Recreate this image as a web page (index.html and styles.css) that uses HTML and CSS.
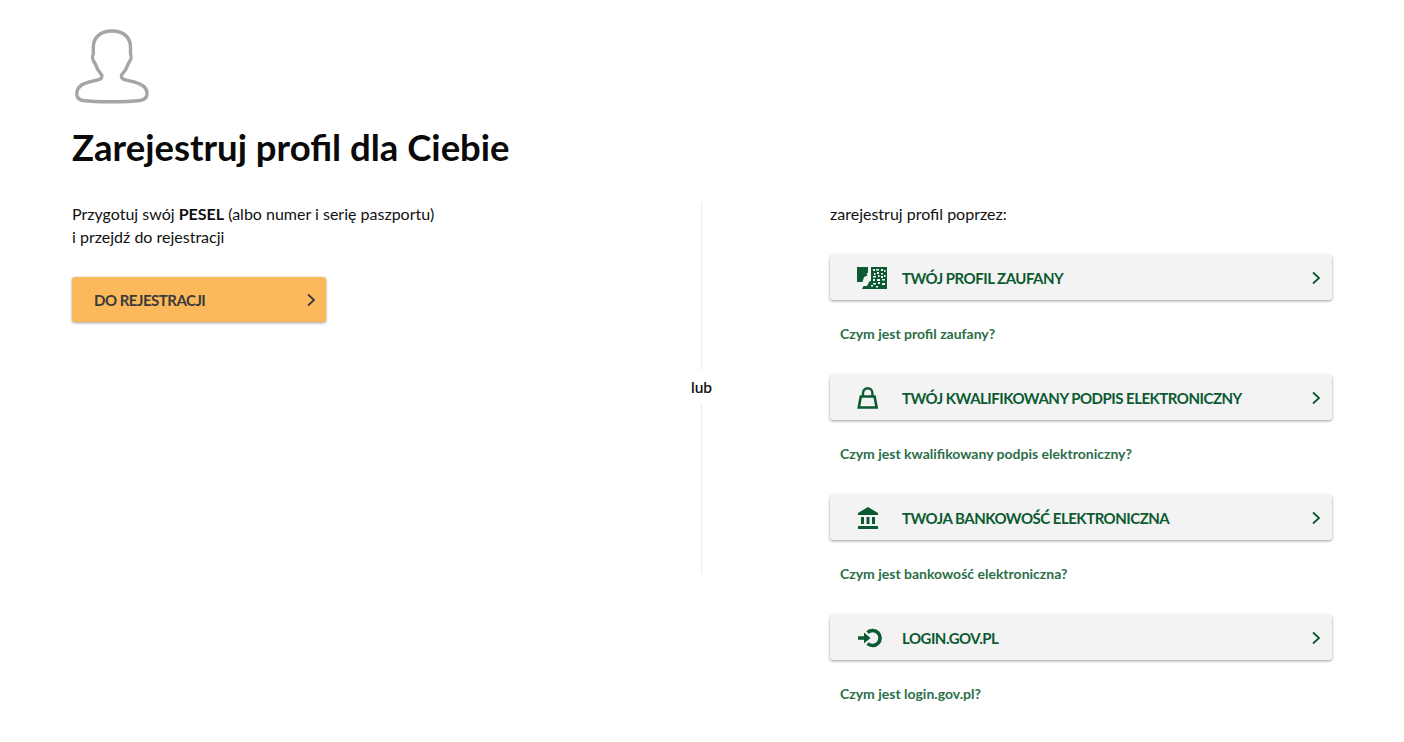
FILE: index.html
```html
<!DOCTYPE html>
<html lang="pl">
<head>
  <meta charset="UTF-8">
  <meta name="viewport" content="width=device-width, initial-scale=1.0">
  <title>Zarejestruj profil dla Ciebie</title>
  <link rel="stylesheet" href="styles.css">
</head>
<body>
  <svg class="avatar" viewBox="74 28 76 76" width="76" height="76">
    <path d="M112 31C100 31 93.300 38 93.300 47V54C91.800 56 92.500 60 95 63.300 96.500 68 99 72 101.700 75 102.500 77 101.500 78.500 99.300 79.300 94 81 86 82 81.700 85 78 87.500 76.500 91 76.800 94.500 77.200 98 79.500 100 83 100.500 92 101.700 102 101.800 111 101.800S131 101.700 140 100.500C143.500 100 146.500 98 147 94.500 147.300 91 146 87.500 141.700 85 137 82 129 81 124 79.300 121.800 78.500 120.800 77 121.600 75 124.500 72 127 68 128.500 63.300 131 60 131.800 56 130.500 54V47C130.500 38 124 31 112 31Z" fill="none" stroke="#a5a5a5" stroke-width="3.400"/>
  </svg>
  <h1>Zarejestruj profil dla Ciebie</h1>

  <div class="columns">
    <div class="left">
      <p class="intro">Przygotuj swój <b>PESEL</b> (albo numer i serię paszportu)<br>i przejdź do rejestracji</p>
      <a class="btn btn-orange" href="#">
        <span>DO REJESTRACJI</span>
        <svg class="chev" viewBox="0 0 10 14" width="10" height="14"><path d="M2 1.500 8 7l-6 5.500" fill="none" stroke="#3a3a3a" stroke-width="1.800"/></svg>
      </a>
    </div>

    <div class="divider"><span>lub</span></div>

    <div class="right">
      <p class="lead">zarejestruj profil poprzez:</p>

      <a class="btn btn-grey" href="#">
        <svg class="ico" viewBox="0 0 32 24" width="32" height="24">
          <path d="M1 1h11v5.500l-1.500 1.500 1 1.500-3.500 1.500-1.500 5H1z" fill="#0b5a31"/>
          <path d="M15 1h16v22H6l1.500-3h3.500l2-4 2-1.500z" fill="#0b5a31"/>
          <path d="M17 3h2v2h-2zm3 0h3v1.500h-3zm5 0h2v2h-2zm3 1h1.500v2H28zM18 7h1.500v2H18zm3-1h2v2h-2zm4 1h2v1.500h-2zm-8 3h3v1.500h-3zm5-1h1.500v2H22zm3 1h2v2h-2zm3-1h1.500v2H28zM17 13h2v2h-2zm4 0h3v2h-3zm5 0h3v1.500h-3zm-9 4h3v1.500h-3zm5-1h2v2h-2zm4 1h3v2h-3zm-11 2h2v1.500h-2zm5 1h2v1.500h-2z" fill="#f3f3f3"/>
        </svg>
        <span>TWÓJ PROFIL ZAUFANY</span>
        <svg class="chev" viewBox="0 0 10 14" width="10" height="14"><path d="M2 1.500 8 7l-6 5.500" fill="none" stroke="#0b5a31" stroke-width="1.800"/></svg>
      </a>
      <a class="more" href="#">Czym jest profil zaufany?</a>

      <a class="btn btn-grey" href="#">
        <svg class="ico" viewBox="0 0 32 24" width="32" height="24">
          <path d="M7 10V7a4.700 4.700 0 0 1 9.400 0v3" fill="none" stroke="#0b5a31" stroke-width="2.400"/>
          <path d="M4.800 10.500h13.800l2 11H2.800z" fill="none" stroke="#0b5a31" stroke-width="2.600"/>
        </svg>
        <span>TWÓJ KWALIFIKOWANY PODPIS ELEKTRONICZNY</span>
        <svg class="chev" viewBox="0 0 10 14" width="10" height="14"><path d="M2 1.500 8 7l-6 5.500" fill="none" stroke="#0b5a31" stroke-width="1.800"/></svg>
      </a>
      <a class="more" href="#">Czym jest kwalifikowany podpis elektroniczny?</a>

      <a class="btn btn-grey" href="#">
        <svg class="ico" viewBox="0 0 32 24" width="32" height="24">
          <path d="M12 1 2 7v2h20V7z" fill="#0b5a31"/>
          <path d="M5 11h3v7H5zm5.500 0h3v7h-3zM16 11h3v7h-3z" fill="#0b5a31"/>
          <path d="M2 20h20v3H2z" fill="#0b5a31"/>
        </svg>
        <span>TWOJA BANKOWOŚĆ ELEKTRONICZNA</span>
        <svg class="chev" viewBox="0 0 10 14" width="10" height="14"><path d="M2 1.500 8 7l-6 5.500" fill="none" stroke="#0b5a31" stroke-width="1.800"/></svg>
      </a>
      <a class="more" href="#">Czym jest bankowość elektroniczna?</a>

      <a class="btn btn-grey" href="#">
        <svg class="ico" viewBox="0 0 32 24" width="32" height="24">
          <path d="M11.500 6.500A7.500 7.500 0 1 1 11.500 17.500" fill="none" stroke="#0b5a31" stroke-width="3.600"/>
          <path d="M2 10.200h6V6.500l6.500 5.500L8 17.500v-3.700H2z" fill="#0b5a31"/>
        </svg>
        <span>LOGIN.GOV.PL</span>
        <svg class="chev" viewBox="0 0 10 14" width="10" height="14"><path d="M2 1.500 8 7l-6 5.500" fill="none" stroke="#0b5a31" stroke-width="1.800"/></svg>
      </a>
      <a class="more" href="#">Czym jest login.gov.pl?</a>
    </div>
  </div>
</body>
</html>
```

FILE: styles.css
```css
html, body {
  height: 100%;
}
body {
  margin: 0;
  padding: 28px 72px 0;
  box-sizing: border-box;
  background: #fff;
  color: #111;
  font-family: Lato, "Liberation Sans", sans-serif;
  font-size: 16px;
  overflow: hidden;
}
a {
  text-decoration: none;
}
.avatar {
  display: block;
  margin-left: 2px;
}
h1 {
  margin: 17px 0 0;
  font-size: 36.500px;
  line-height: 52px;
  font-weight: 700;
  color: #0a0a0a;
}
.columns {
  display: flex;
  margin-top: 29px;
}
.left {
  width: 629px;
}
.intro {
  margin: 0;
  line-height: 23px;
}
.btn {
  display: flex;
  align-items: center;
  box-sizing: border-box;
  height: 45px;
  border-radius: 3px;
  font-size: 15px;
  font-weight: 700;
  letter-spacing: -0.5px;
  box-shadow: 0 1px 3px rgba(0, 0, 0, 0.4);
}
.btn .chev {
  margin-left: auto;
}
.btn-orange {
  width: 254px;
  margin-top: 29px;
  padding: 0 10px 0 22px;
  background: #fbb95c;
  color: #3a3a3a;
}
.btn-grey {
  padding: 0 11px 0 26px;
  background: #f3f3f3;
  color: #0b5a31;
}
.ico {
  margin-right: 14px;
}
.divider {
  position: relative;
  width: 1px;
  height: 372px;
  background: #ebebeb;
}
.divider span {
  position: absolute;
  top: 168px;
  left: -14px;
  width: 29px;
  padding: 6px 0;
  background: #fff;
  text-align: center;
  font-size: 15.500px;
  font-weight: 600;
  line-height: 22px;
}
.right {
  width: 502px;
  margin-left: 128px;
}
.lead {
  margin: 0 0 30px;
  line-height: 23px;
}
.more {
  display: block;
  margin: 24px 0 32px 10px;
  height: 19px;
  color: #2c6e49;
  font-size: 14px;
  font-weight: 700;
  line-height: 19px;
}
```
